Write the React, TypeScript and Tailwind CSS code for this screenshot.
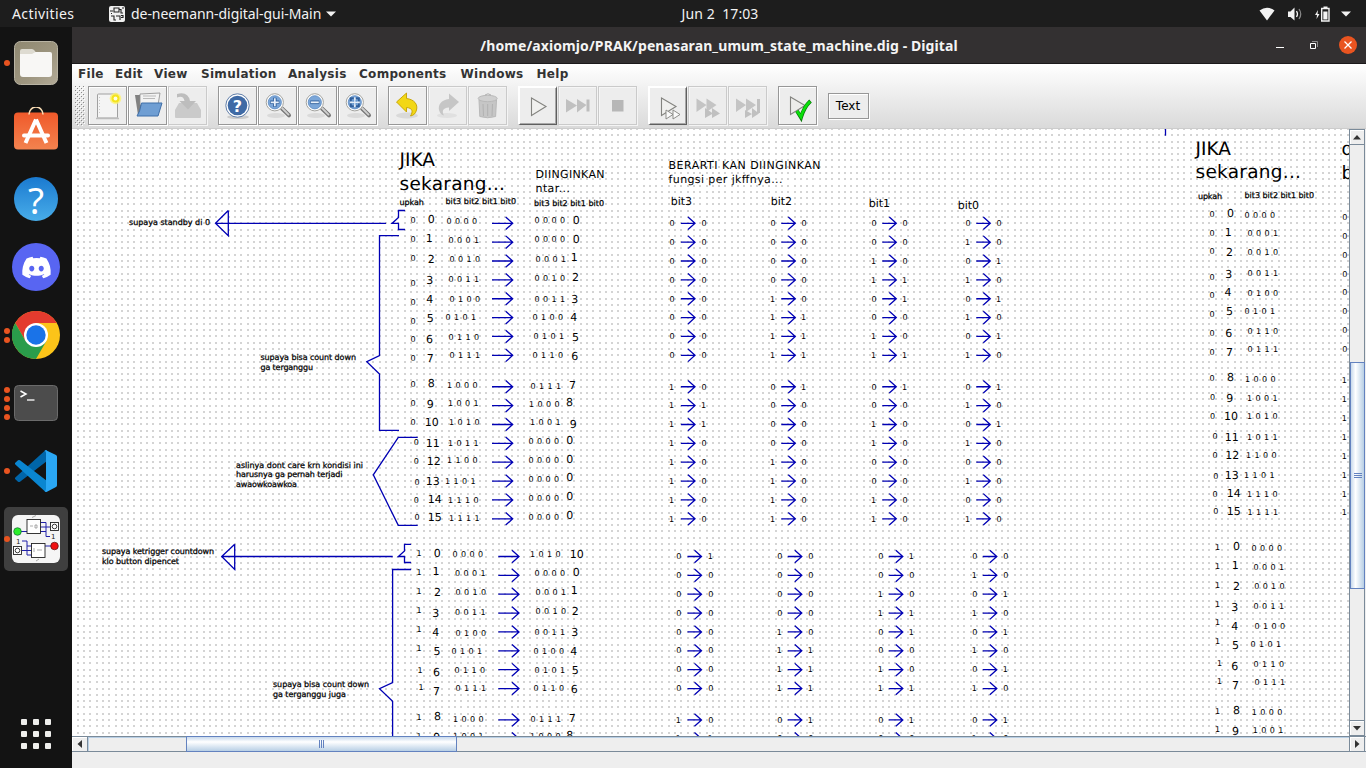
import React from "react";
import { FaDiscord } from "react-icons/fa";

const INK = "#0000b4";
const PITCH = 6.287;

type Row = [number, number];
type Block = {
  flag: string;
  flagPos: Row[];
  decPos: Row[];
  binPos: Row[];
};

const leftTop: Block = {
  flag: "0",
  flagPos: [[411, 220], [411, 239], [411, 258], [411, 283], [411, 302], [411, 321], [411, 339], [411, 358], [411, 384], [411, 402.6], [411, 421.6], [414.3, 442], [414.3, 461], [415, 482.3], [414.3, 500], [415, 517]],
  decPos: [[428.5, 219.3], [427, 238.3], [428.5, 259.3], [427, 280.3], [427, 299.3], [427.5, 318.3], [426.7, 339], [427.5, 358.3], [428.5, 383], [427.5, 404], [426, 422], [427, 443], [428, 461], [427, 481], [429, 499], [429, 517]],
  binPos: [[447, 221], [449, 240], [450, 259], [449, 279], [450, 299], [446, 317], [449, 337], [450, 355], [448, 385], [449, 403], [450, 422], [449, 443], [448, 460], [446, 481], [449, 500], [450, 518]],
};

const leftBottom: Block = {
  flag: "1",
  flagPos: [[417.5, 553.3], [417.5, 572.3], [417.5, 591.3], [417.5, 610.3], [417.5, 629.3], [417.5, 648.3], [418.5, 670.3], [419.5, 687.3], [417.5, 717], [417.5, 736]],
  decPos: [[434.5, 553.3], [433.7, 571.3], [434.7, 592.3], [433, 613.3], [433, 632.3], [434.3, 651.3], [433.7, 672.3], [433.7, 691.3], [434.7, 716.3], [434, 737]],
  binPos: [[453, 554], [455.5, 573], [456, 592], [455.5, 612], [456, 632.5], [452, 651], [455, 670], [456, 688], [454, 719], [454, 736]],
};

const rightTop: Block = {
  flag: "0",
  flagPos: [[1210, 214], [1210, 233], [1210, 251.3], [1210, 276.7], [1210, 295], [1210, 314], [1210, 333], [1210, 352], [1210, 377.5], [1210.5, 397], [1210.5, 416], [1213, 436], [1213, 455], [1213.7, 476], [1213, 494], [1213.7, 511]],
  decPos: [[1227.7, 213.3], [1226, 232.3], [1226.7, 252.3], [1226, 274.3], [1225.3, 292.3], [1226.7, 311.3], [1226, 333.3], [1226.7, 352.3], [1227.7, 377.3], [1227, 398], [1225.3, 416], [1226, 437], [1226.5, 455], [1226, 475], [1228, 493], [1228, 511]],
  binPos: [[1245, 215], [1248, 233], [1248, 252], [1248, 273], [1248, 293], [1245, 311], [1248, 331], [1248, 348.5], [1246, 379], [1248, 397.5], [1248, 416], [1248, 437], [1247, 455], [1245, 475], [1248, 494], [1248.5, 512]],
};

const rightBottom: Block = {
  flag: "1",
  flagPos: [[1216, 547], [1216, 566], [1216, 585.3], [1216, 604], [1216, 622.3], [1216, 641.3], [1218, 663.3], [1218, 681.3], [1216, 711], [1216, 729]],
  decPos: [[1233.7, 546], [1233, 565], [1233.7, 586], [1232, 607], [1232, 626], [1232.7, 645], [1232, 666], [1232.7, 685], [1233.7, 710], [1232.7, 730.7]],
  binPos: [[1252, 548], [1254, 567], [1254.7, 586], [1254, 606], [1255, 626], [1251, 644], [1254, 664], [1255, 682], [1252.7, 712], [1253.7, 730]],
};

type Target = { pos: Row; val: Row };
const nextTop: Target[] = [
  { pos: [535, 220.3], val: [573.5, 220.3] },
  { pos: [535, 239.3], val: [573.5, 239.3] },
  { pos: [536, 259], val: [572, 257.3] },
  { pos: [535, 278], val: [572.7, 277.3] },
  { pos: [535, 299], val: [572, 299.3] },
  { pos: [533, 317], val: [571, 317.3] },
  { pos: [534, 336], val: [572.7, 337.3] },
  { pos: [533, 355], val: [572, 356.3] },
  { pos: [531, 385.7], val: [569.7, 385] },
  { pos: [530, 404], val: [566.7, 402] },
  { pos: [531, 422], val: [570.5, 424] },
  { pos: [529, 441], val: [567, 440] },
  { pos: [529, 460], val: [567, 459] },
  { pos: [529, 479], val: [567, 477.3] },
  { pos: [529, 498], val: [567, 496.3] },
  { pos: [529, 517], val: [567, 515.3] },
];
const nextBottom: Target[] = [
  { pos: [531, 554], val: [571, 554] },
  { pos: [535, 573], val: [573.5, 572.4] },
  { pos: [536, 592], val: [572, 590.4] },
  { pos: [536, 611], val: [572.5, 611] },
  { pos: [535, 632], val: [572, 632] },
  { pos: [534, 651], val: [571, 651] },
  { pos: [535, 670], val: [572.5, 670] },
  { pos: [534, 688], val: [571.5, 689] },
  { pos: [531, 718.5], val: [569.5, 718] },
  { pos: [531, 736], val: [567, 735] },
];

const nextTopValues = [0, 0, 1, 2, 3, 4, 5, 6, 7, 8, 9, 0, 0, 0, 0, 0];
const nextBottomValues = [10, 0, 1, 2, 3, 4, 5, 6, 7, 8];

const bits = (n: number) => n.toString(2).padStart(4, "0");
const rowY = (base: number, i: number) => base + PITCH * (i * 3 + (i > 7 ? 2 : 0));

function Label({ x, y, size, w, children }: { x: number; y: number; size: number; w?: number; children: string }) {
  return (
    <text x={x} y={y} fontSize={size} textLength={w} lengthAdjust="spacing">
      {children}
    </text>
  );
}

function inkLeft(x: number, s: string, size: number) {
  return x - size * (s[0] === "1" ? 0.11 : 0.066);
}

function Digit({ at, s }: { at: Row; s: string }) {
  return <Label x={inkLeft(at[0], s, 8)} y={Math.round(at[1] + 3)} size={8}>{s}</Label>;
}

function Num({ at, s }: { at: Row; s: string }) {
  return <Label x={inkLeft(at[0], s, 11)} y={Math.round(at[1] + 4)} size={11}>{s}</Label>;
}

function Bin({ at, s }: { at: Row; s: string }) {
  return <Label x={inkLeft(at[0], s, 8)} y={Math.round(at[1] + 3)} size={8} w={30.5}>{s.split("").join(" ")}</Label>;
}

function Arrow({ x, y, len }: { x: number; y: number; len: number }) {
  const e = x + len;
  return <path d={`M${x} ${y}H${e}M${e - 7} ${y - 6.3}L${e} ${y}L${e - 7} ${y + 6.3}`} />;
}

function BlockText({ b }: { b: Block }) {
  return (
    <g>
      {b.flagPos.map((p, i) => (
        <g key={i}>
          <Digit at={p} s={b.flag} />
          <Num at={b.decPos[i]} s={String(i)} />
          <Bin at={b.binPos[i]} s={bits(i)} />
        </g>
      ))}
    </g>
  );
}

const jkCols = [
  { a: 670, l: 681, b: 702 },
  { a: 771, l: 781.3, b: 802 },
  { a: 872, l: 882.3, b: 903 },
  { a: 966, l: 976.3, b: 997 },
];

function Transitions({ values, base, dx }: { values: number[]; base: number; dx: number }) {
  return (
    <g>
      {values.map((v, i) =>
        jkCols.map((c, k) => (
          <g key={`${i}-${k}`}>
            <Digit at={[c.a + dx, rowY(base, i) - 0.2]} s={bits(i)[k]} />
            <Digit at={[c.b + dx, rowY(base, i) - 0.2]} s={bits(v)[k]} />
          </g>
        ))
      )}
    </g>
  );
}

function Canvas() {
  const dots: React.ReactNode[] = [];
  for (let r = 0; r < 97; r++)
    for (let c = 0; c < 203; c++)
      dots.push(<rect key={`${r}-${c}`} x={Math.round(76.8 + c * PITCH)} y={Math.round(128 + r * PITCH)} width="2" height="2" />);
  return (
    <svg viewBox="72 129 1277 607" className="block h-[607px] w-[1277px] bg-white">
      <g fill="#d4d4d4" shapeRendering="crispEdges">{dots}</g>
      <g fill="none" stroke={INK} strokeWidth="1.3">
        <path d="M386 223.4H216M228.3 210.5V235.7L215.5 223.3L228.3 210.5" />
        <path d="M405 210.5H398.5V217.5L392 223.4H398.5V229.5H405" />
        <path d="M399 235.6H379.5V355.7L366.8 361.6L379.5 374V430.4H399" />
        <path d="M417.7 437.4H398.3L373.3 474.8L398.3 525.4H417.7" />
        <path d="M392.7 556.5H222M234.7 544.3V569.5L221.7 556.5L234.7 544.3" />
        <path d="M411 544.4H404.5V551L398.3 556.5H404.5V562.5H411" />
        <path d="M411 569.5H392.6V682.5L379.5 688.6L392.6 701.3V740" />
        <path d="M1165.5 128V135.7" />
        {nextTopValues.map((_, i) => (
          <g key={i}>
            <Arrow x={492} y={rowY(223.3, i)} len={20.7} />
            {jkCols.map((c) => <Arrow key={c.l} x={c.l} y={rowY(223.3, i)} len={14} />)}
          </g>
        ))}
        {nextBottomValues.map((_, i) => (
          <g key={i}>
            <Arrow x={498.3} y={rowY(556.5, i)} len={20.7} />
            {jkCols.map((c) => <Arrow key={c.l} x={c.l + 6.5} y={rowY(556.5, i)} len={14} />)}
          </g>
        ))}
      </g>
      <g fill="#000" textRendering="geometricPrecision" style={{ fontFamily: '"DejaVu Sans", sans-serif' }}>
        <Label x={399.5} y={166} size={18.5}>JIKA</Label>
        <Label x={399.5} y={190} size={18.5} w={105.5}>sekarang...</Label>
        <Label x={535.5} y={178} size={11} w={69}>DIINGINKAN</Label>
        <Label x={535.5} y={192} size={11} w={34.5}>ntar...</Label>
        <Label x={668.5} y={169} size={11} w={152}>BERARTI KAN DIINGINKAN</Label>
        <Label x={668.5} y={183} size={11} w={114}>fungsi per jkffnya...</Label>
        <Label x={670.7} y={205} size={11}>bit3</Label>
        <Label x={770.7} y={205} size={11}>bit2</Label>
        <Label x={868.7} y={207} size={11}>bit1</Label>
        <Label x={957.7} y={209} size={11}>bit0</Label>
        <Label x={1195.5} y={155} size={18.5}>JIKA</Label>
        <Label x={1195.5} y={178} size={18.5} w={105.5}>sekarang...</Label>
        <Label x={1341.5} y={155} size={18.5}>d</Label>
        <Label x={1341.5} y={179} size={18.5}>b</Label>
        <g stroke="#000" strokeWidth="0.25">
          <Label x={399.5} y={205} size={8} w={24.3}>upkah</Label>
          <Label x={445.5} y={204} size={8} w={70.5}>bit3 bit2 bit1 bit0</Label>
          <Label x={534} y={206} size={8} w={70}>bit3 bit2 bit1 bit0</Label>
          <Label x={1198} y={199} size={8} w={24}>upkah</Label>
          <Label x={1244.5} y={198} size={8} w={69.5}>bit3 bit2 bit1 bit0</Label>
          <Label x={129} y={225} size={8} w={81}>supaya standby di 0</Label>
          <Label x={260.5} y={360} size={8} w={95.5}>supaya bisa count down</Label>
          <Label x={260.5} y={370} size={8} w={52.5}>ga terganggu</Label>
          <Label x={236} y={468} size={8} w={127}>aslinya dont care krn kondisi ini</Label>
          <Label x={236} y={477} size={8} w={106.5}>harusnya ga pernah terjadi</Label>
          <Label x={236} y={487} size={8} w={61}>awaowkoawkoa</Label>
          <Label x={102} y={554} size={8} w={112}>supaya ketrigger countdown</Label>
          <Label x={102} y={564} size={8} w={77}>klo button dipencet</Label>
          <Label x={273} y={687} size={8} w={96}>supaya bisa count down</Label>
          <Label x={273} y={697} size={8} w={73}>ga terganggu juga</Label>
        </g>
        <BlockText b={leftTop} />
        <BlockText b={leftBottom} />
        <BlockText b={rightTop} />
        <BlockText b={rightBottom} />
        {nextTop.map((t, i) => (
          <g key={i}>
            <Bin at={t.pos} s={bits(nextTopValues[i])} />
            <Num at={t.val} s={String(nextTopValues[i])} />
          </g>
        ))}
        {nextBottom.map((t, i) => (
          <g key={i}>
            <Bin at={t.pos} s={bits(nextBottomValues[i])} />
            <Num at={t.val} s={String(nextBottomValues[i])} />
          </g>
        ))}
        <Transitions values={nextTopValues} base={223.3} dx={0} />
        <Transitions values={nextBottomValues} base={556.3} dx={6.7} />
        {nextTopValues.map((_, i) => (
          <Digit key={i} at={[1342.7, rowY(217, i)]} s={bits(i)[0]} />
        ))}
      </g>
    </svg>
  );
}

/* ---------- dock ---------- */

function DockItem({ dots = 0, active = false, children }: { dots?: number; active?: boolean; children: React.ReactNode }) {
  return (
    <div className="flex h-[68px] w-[72px] items-center px-1">
      <div className={active ? "flex h-16 w-16 items-center rounded-[5px] bg-[#3f3f3f]" : "flex h-16 w-16 items-center"}>
        <div className="flex w-2 flex-col items-start gap-[3px]">
          {Array.from({ length: dots }, (_, i) => (
            <span key={i} className="size-[6px] rounded-full bg-[#e95420]" />
          ))}
        </div>
        {children}
      </div>
    </div>
  );
}

function Dock() {
  return (
    <nav className="flex w-[72px] shrink-0 flex-col bg-[#131313] pt-[2px]">
      <DockItem dots={1}>
        <svg className="size-12" viewBox="0 0 48 48">
          <defs>
            <linearGradient id="fileBg" x1="0" y1="0" x2="1" y2="1">
              <stop offset="0" stopColor="#8f8871" />
              <stop offset=".6" stopColor="#9e9680" />
              <stop offset="1" stopColor="#b3ab98" />
            </linearGradient>
          </defs>
          <rect x="2.5" y="2.5" width="43" height="43" rx="6" fill="url(#fileBg)" stroke="#b8b3a3" />
          <path d="M8 12q0-2 2-2h10q1.500 0 2.500 1.500l1.500 2h14v8H8z" fill="#dedbd1" />
          <path d="M8 15h12l3.500-2H38q2 0 2 2v20q0 3-3 3H11q-3 0-3-3z" fill="#f8f7f5" />
        </svg>
      </DockItem>
      <DockItem>
        <svg className="size-12" viewBox="0 0 48 48">
          <defs>
            <linearGradient id="bag" x1="0" y1="0" x2="0" y2="1">
              <stop offset="0" stopColor="#f0592a" />
              <stop offset="1" stopColor="#f3834f" />
            </linearGradient>
          </defs>
          <rect x="2" y="5.500" width="44" height="37" rx="4" fill="url(#bag)" />
          <path d="M17 7.500a7 7.500 0 0 1 14 0" fill="none" stroke="#f8dcb4" strokeWidth="1.6" />
          <path d="M24 12.500L13.500 36M24 12.500L34.500 36" stroke="#fff" strokeWidth="4" fill="none" />
          <path d="M12 28.500H36" stroke="#fff" strokeWidth="4" strokeLinecap="round" />
        </svg>
      </DockItem>
      <DockItem>
        <div className="mx-0.5 flex size-11 items-center justify-center rounded-full bg-linear-to-b from-[#1a7ad0] to-[#48ade9] font-['Noto_Sans',sans-serif] text-[37px] leading-none text-white">
          ?
        </div>
      </DockItem>
      <DockItem>
        <div className="flex size-12 items-center justify-center rounded-full bg-[#5865f2] text-white">
          <FaDiscord size={31} />
        </div>
      </DockItem>
      <DockItem dots={2}>
        <svg className="size-12" viewBox="0 0 48 48">
          <circle cx="24" cy="24" r="24" fill="#fcc419" />
          <path d="M24 12H44.800A24 24 0 0 0 3.200 12L13.600 30Z" fill="#e33b2e" />
          <path d="M3.200 12A24 24 0 0 0 24 48L34.400 30L24 36L13.600 30Z" fill="#2a9d4b" />
          <circle cx="24" cy="24" r="12" fill="#fff" />
          <circle cx="24" cy="24" r="9.700" fill="#1a73e8" />
        </svg>
      </DockItem>
      <DockItem dots={4}>
        <svg className="size-12" viewBox="0 0 48 48">
          <rect x="2.500" y="6.500" width="43" height="35" rx="4" fill="#4c4c4c" stroke="#6b6b6b" />
          <path d="M8.500 12L14 15L8.500 18" fill="none" stroke="#fff" strokeWidth="1.500" />
          <path d="M15 21H22.500" stroke="#fff" strokeWidth="1.300" />
        </svg>
      </DockItem>
      <DockItem dots={1}>
        <svg className="size-12" viewBox="0 0 48 48">
          <path d="M3.300 30.500Q2.500 31.500 3.300 32.300L6 34.700Q7 35.300 8 34.700L35 14V3Q33.500 3 32.500 4Z" fill="#0065a9" />
          <path d="M3.300 17.500Q2.500 16.500 3.300 15.700L6 13.300Q7 12.700 8 13.300L35 34V45Q33.500 45 32.500 44Z" fill="#0a86d1" />
          <path d="M34 3.300L44 8Q45 8.600 45 9.700V38.300Q45 39.400 44 40L35 44.700Q33.500 45.200 32.500 44Q34 44 34 42V6Q34 4 32.500 4Q33 3 34 3.300Z" fill="#2aa7f4" />
        </svg>
      </DockItem>
      <DockItem dots={1} active>
        <svg className="size-12" viewBox="0 0 48 48">
          <rect width="48" height="48" rx="6" fill="#f5f5f5" />
          <g fill="none" stroke="#2020a8" strokeWidth="1">
            <path d="M9 16.500H15M28 7.500H34V21.500H38M28 12H38M28 16.500H34M10 26H15V40H20M15 31H20M10 35.500H20M33 31H39" />
          </g>
          <g fill="#fff" stroke="#222" strokeWidth=".9">
            <rect x="15" y="4.500" width="13.500" height="14" />
            <rect x="19.500" y="28.500" width="13.500" height="14" />
            <rect x="38.500" y="7.500" width="8" height="8" />
            <rect x="1.500" y="31.500" width="8" height="8" />
            <circle cx="42.500" cy="11.500" r="2.300" />
            <circle cx="5.500" cy="35.500" r="2.300" />
          </g>
          <circle cx="5.500" cy="16.500" r="3.800" fill="#2bee2b" stroke="#163" strokeWidth=".7" />
          <circle cx="42.500" cy="31" r="3.800" fill="#f01010" stroke="#511" strokeWidth=".7" />
          <path d="M18 11h3m2-1h2v3h-2zM25 35h5M22 33v4M20 2.500l4-2M24 46l3-2" stroke="#888" strokeWidth=".7" fill="none" />
          <g fill="#222" fontSize="7" style={{ fontFamily: '"DejaVu Sans", sans-serif' }}>
            <text x="39" y="24">1</text>
            <text x="4" y="28.500">1</text>
          </g>
        </svg>
      </DockItem>
      <div className="mt-auto mb-[19px] grid grid-cols-3 gap-[6px] self-center">
        {Array.from({ length: 9 }, (_, i) => (
          <span key={i} className="size-[6px] rounded-[1px] bg-[#eeeeec]" />
        ))}
      </div>
    </nav>
  );
}

/* ---------- toolbar ---------- */

function Tool({ look = "on", children }: { look?: "on" | "off" | "run"; children: React.ReactNode }) {
  const cls =
    look === "on"
      ? "border border-[#979797] shadow-[inset_1px_1px_0_#fff,1px_1px_0_#fff]"
      : look === "off"
        ? "border border-[#cacaca] shadow-[inset_1px_1px_0_#f6f6f6,1px_1px_0_#f4f4f4]"
        : "border-t-2 border-l-2 border-r border-b border-t-white border-l-white border-r-[#5f5f5f] border-b-[#5f5f5f] shadow-[inset_-1px_-1px_0_#a8a8a8]";
  return (
    <button className={`mr-px flex h-[39px] w-[39px] items-center justify-center bg-[#ededed] ${cls}`}>
      <svg viewBox="0 0 39 39" className="h-[39px] w-[39px] shrink-0">{children}</svg>
    </button>
  );
}

function Magnifier({ children }: { children: React.ReactNode }) {
  return (
    <>
      <ellipse cx="18" cy="29.500" rx="9" ry="2.500" fill="#dadada" />
      <path d="M24 22.500L31 29.300" stroke="#777" strokeWidth="4" strokeLinecap="round" />
      <path d="M24 22L30.500 28.600" stroke="#cfcfcf" strokeWidth="1.800" strokeLinecap="round" />
      <g transform="translate(-.7 .8)">
        <circle cx="17.500" cy="15.500" r="8.600" fill="#fff" stroke="#a3a39f" strokeWidth="1" />
        <circle cx="17.500" cy="15.500" r="6.600" fill="#7ba6d8" stroke="#5c8ac2" strokeWidth=".8" />
        {children}
      </g>
    </>
  );
}

const ffwd = "M11 12.500L21 19L11 26ZM21 12.500L31 19L21 26Z";

function Toolbar() {
  return (
    <div className="flex h-[45px] items-start pt-[3px] pl-[3px]">
      <svg className="mr-[3px] h-10 w-[10px]" viewBox="0 0 10 40">
        <defs>
          <pattern id="grip" width="4" height="4" patternUnits="userSpaceOnUse">
            <rect width="1" height="1" fill="#8a8a8a" />
            <rect x="2" y="2" width="1" height="1" fill="#8a8a8a" />
            <rect x="1" y="1" width="1" height="1" fill="#fff" />
            <rect x="3" y="3" width="1" height="1" fill="#fff" />
          </pattern>
        </defs>
        <rect width="10" height="40" fill="url(#grip)" />
      </svg>
      <div className="mr-[10px] flex">
        <Tool>
          <rect x="9.500" y="8" width="20" height="24" rx="1" fill="#f4f4f4" stroke="#a0a0a0" />
          <path d="M8 32.500H31" stroke="#bcbcbc" strokeWidth="1.500" />
          <path d="M11.500 11v18" stroke="#c8c8c8" strokeDasharray="1 2" />
          <circle cx="27.500" cy="12.500" r="5.800" fill="#fff36b" opacity=".75" />
          <circle cx="27.500" cy="12.500" r="4" fill="#f4e41c" />
          <circle cx="27.500" cy="12.500" r="1.900" fill="#fffde0" />
        </Tool>
        <Tool>
          <path d="M7 9h8l2 2v18H10z" fill="#808080" />
          <path d="M12 8l20-1-2 12H12z" fill="#f3f3f3" stroke="#8a8a8a" strokeWidth=".8" />
          <path d="M15 10h13M15 12.500h12" stroke="#aaa" strokeWidth=".8" />
          <path d="M13.500 17H34l-4 13H9q3-4 4.500-13z" fill="#6f9ed3" stroke="#3f6ea8" />
        </Tool>
        <Tool look="off">
          <path d="M7 24l4-7h18l4 7v7q0 1-1 1H8q-1 0-1-1z" fill="#cacaca" />
          <path d="M9 8q11-3 13 7h6l-8 8.500-8.500-8.500h5q-1-6-7.500-3.500z" fill="#bdbdbd" />
        </Tool>
      </div>
      <div className="mr-[10px] flex">
        <Tool>
          <ellipse cx="20" cy="31" rx="11" ry="2" fill="#ccc" />
          <circle cx="19.500" cy="19.500" r="11.700" fill="#fff" stroke="#4e6f9f" strokeWidth=".9" />
          <circle cx="19.500" cy="19.500" r="9.800" fill="#3f6aa5" />
          <text x="19.500" y="25.500" textAnchor="middle" fontSize="16" fontWeight="700" fill="#fff" style={{ fontFamily: '"DejaVu Sans", sans-serif' }}>?</text>
        </Tool>
        <Tool>
          <Magnifier>
            <path d="M17.500 11v9M13 15.500h9" stroke="#2f5f9c" strokeWidth="3.600" />
            <path d="M17.500 11.500v8M13.500 15.500h8" stroke="#e8f0fa" strokeWidth="1.800" />
          </Magnifier>
        </Tool>
        <Tool>
          <Magnifier>
            <path d="M13 15.500h9" stroke="#2f5f9c" strokeWidth="3.600" />
            <path d="M13.500 15.500h8" stroke="#e8f0fa" strokeWidth="1.800" />
          </Magnifier>
        </Tool>
        <Tool>
          <Magnifier>
            <rect x="13.500" y="11.500" width="8" height="8" fill="none" stroke="#2f5f9c" strokeWidth="2" />
            <path d="M17.500 10.500v10M12.500 15.500h10" stroke="#e4edf8" strokeWidth="1.800" />
            <path d="M15 13h5v5h-5z" fill="#6b9bd0" />
            <path d="M17.500 12v7M14 15.500h7" stroke="#e4edf8" strokeWidth="1.200" />
          </Magnifier>
        </Tool>
      </div>
      <div className="mr-[10px] flex">
        <Tool>
          <ellipse cx="19" cy="29.500" rx="11" ry="3" fill="#d9d9d9" />
          <path d="M8.500 16L18.500 7v5.500c8 1 11.500 6 10 11.500-.8 3.500-3 5.500-6 6 2.500-4 2.500-8-4-8.500V26z" fill="#f2d716" stroke="#c4a000" strokeWidth=".9" />
        </Tool>
        <Tool look="off">
          <ellipse cx="19" cy="29.500" rx="10" ry="2.500" fill="#e0e0e0" />
          <path d="M31 16L21 7.500v5.500c-8 1-11 6-10 11 .8 3.500 3 5 5 5.500-2-4-2-7.500 5-8V25z" fill="#c6c6c6" />
        </Tool>
        <Tool look="off">
          <path d="M11 14l.8 16.500q7.700 2.500 15.800 0L28.500 14z" fill="#c6c6c6" stroke="#b9b9b9" />
          <ellipse cx="19.700" cy="12.500" rx="9.500" ry="3.200" fill="#cfcfcf" stroke="#b9b9b9" />
          <path d="M17 9q3-2.500 6 0M15 18l.5 12M19.700 18v12M24.500 18L24 30" stroke="#b2b2b2" fill="none" />
        </Tool>
      </div>
      <div className="mr-[10px] flex">
        <Tool look="run">
          <path d="M12.500 11L27 19.500L12.500 28.500Z" fill="#f0f0ee" stroke="#83837f" strokeWidth="1.100" />
        </Tool>
        <Tool look="off">
          <path d="M8 13L19 19.500L8 26.500ZM19 13L28.500 19L19 26.500Z" fill="#c0c0c0" />
          <path d="M30 13.500v12" stroke="#bdbdbd" strokeWidth="3" />
        </Tool>
        <Tool look="off">
          <rect x="14" y="14" width="11.500" height="11.500" fill="#b7b7b7" />
        </Tool>
      </div>
      <div className="mr-[10px] flex">
        <Tool look="run">
          <path d="M12.500 11L27 19.500L12.500 28.500Z" fill="#f0f0ee" stroke="#83837f" strokeWidth="1.100" />
          <path d="M17 23L24 27.500L17 32ZM24 23L31 27.500L24 32Z" fill="#fafafa" stroke="#83837f" strokeWidth=".9" />
        </Tool>
        <Tool look="off">
          <path d={ffwd} transform="translate(-2.500 0)" fill="#c4c4c4" />
          <path d="M17 22L25 27.500L17 32ZM24 22L32 27.500L24 32Z" fill="#c0c0c0" />
        </Tool>
        <Tool look="off">
          <path d={ffwd} transform="translate(-3 0)" fill="#c4c4c4" />
          <path d="M17 24L24 28L17 32ZM24 22L31 27.500L24 32Z" fill="#c0c0c0" />
          <path d="M30.500 13v14" stroke="#c0c0c0" strokeWidth="3" />
        </Tool>
      </div>
      <div className="mr-[10px] flex">
        <Tool>
          <path d="M12.500 11L27 19.500L12.500 28.500Z" fill="#ececea" stroke="#83837f" strokeWidth="1.100" />
          <path d="M19 25L23 31.500Q26 21 32.500 15" fill="none" stroke="#087a08" strokeWidth="3.800" />
          <path d="M19 25L23 31Q26 21 32 15.500" fill="none" stroke="#0be00b" strokeWidth="2.600" />
        </Tool>
      </div>
      <button className="mt-[7px] h-[26px] w-[41px] border border-[#979797] bg-[#ededed] pr-px font-['DejaVu_Sans',sans-serif] text-[12px] leading-[22px] text-black shadow-[inset_1px_1px_0_#fff,1px_1px_0_#fff]">
        Text
      </button>
    </div>
  );
}

function ScrollButton({ d, className }: { d: string; className: string }) {
  return (
    <button className={`flex shrink-0 items-center justify-center bg-[#eeeeee] shadow-[inset_1px_1px_0_#fff] ${className}`}>
      <svg viewBox="0 0 10 10" className="size-[10px]"><path d={d} fill="#333" /></svg>
    </button>
  );
}

function StatusIcons() {
  return (
    <div className="flex items-center">
      <svg className="mr-3 h-[14px] w-4" viewBox="0 0 16 14"><path d="M.5 3.500Q8-1.800 15.500 3.500L8 13.500Z" fill="#f2f2f2" /></svg>
      <svg className="mr-[12px] h-[14px] w-[16px]" viewBox="0 0 16 14">
        <path d="M1 4.500h2.500L7.500.5v13L3.500 10H1z" fill="#f2f2f2" />
        <path d="M9.500 4q2 3 0 6" stroke="#f2f2f2" strokeWidth="1.300" fill="none" />
        <path d="M12 2q3.500 5 0 10" stroke="#8a8a8a" strokeWidth="1.200" fill="none" />
      </svg>
      <svg className="mr-[11px] h-4 w-[15px]" viewBox="0 0 15 16">
        <path d="M3 4L0 9h2L1.500 13L4.500 8h-2z" fill="#f2f2f2" />
        <path d="M6.700 2.500H14V15H6.700zM8.500 1.200h4" fill="none" stroke="#f2f2f2" strokeWidth="1.400" />
        <rect x="8.300" y="5.500" width="4.200" height="8" fill="#f2f2f2" />
      </svg>
      <svg className="h-[6px] w-[10px]" viewBox="0 0 10 6"><path d="M0 .5h10L5 5.500z" fill="#f2f2f2" /></svg>
    </div>
  );
}

const menus: [string, string][] = [
  ["File", "w-[37px]"],
  ["Edit", "w-[39px]"],
  ["View", "w-[47px]"],
  ["Simulation", "w-[87px]"],
  ["Analysis", "w-[71px]"],
  ["Components", "w-[101.5px]"],
  ["Windows", "w-[76px]"],
  ["Help", "w-[40px]"],
];

export default function App() {
  return (
    <div className="flex h-[768px] w-[1366px] flex-col overflow-hidden bg-[#131313]">
      <header className="grid h-[27px] shrink-0 grid-cols-[1fr_auto_1fr] items-center bg-[#1d1d1d] font-['Noto_Sans',sans-serif] text-[14px] text-[#f2f2f2]">
        <div className="flex items-center pl-[12px]">
          <span className="w-[97px] tracking-[0.4px]">Activities</span>
          <svg className="mr-[6px] size-4" viewBox="0 0 16 16">
            <rect width="16" height="16" rx="2" fill="#f0f0f0" />
            <path d="M1 5h3M5 2h5v4H5zM10 3.500h2V7h2M13 2h2M2 10h3v4h2M7 10h4v4M12 9.500h2v2h-2M2 7.500h1" fill="none" stroke="#222" strokeWidth="1.100" />
          </svg>
          <span className="tracking-[-0.06px]">de-neemann-digital-gui-Main</span>
          <svg className="ml-[5px] h-[6px] w-[10px]" viewBox="0 0 10 6"><path d="M0 .5h10L5 5.500z" fill="#f2f2f2" /></svg>
        </div>
        <div className="relative left-[37px] whitespace-pre tracking-[0.08px]">Jun 2  17:03</div>
        <div className="flex justify-end pr-[15px]"><StatusIcons /></div>
      </header>

      <div className="flex min-h-0 flex-1">
        <Dock />
        <main className="flex w-[1294px] flex-col bg-[#eeeeee]">
          <div className="grid h-[37px] shrink-0 grid-cols-[1fr_auto_1fr] items-center border-b border-[#1c1a1b] bg-[#333031]">
            <span />
            <h1 className="font-['Noto_Sans',sans-serif] text-[14px] font-bold tracking-[0.09px] text-[#f4f4f4]">
              /home/axiomjo/PRAK/penasaran_umum_state_machine.dig - Digital
            </h1>
            <div className="flex items-center justify-end pr-[9px]">
              <svg className="mr-[26px] h-[10px] w-2" viewBox="0 0 8 10"><path d="M0 7.500h8" stroke="#fff" /></svg>
              <svg className="mr-[21px] size-2" viewBox="0 0 8 8">
                <path d="M.5 2.500h5v5h-5z" fill="none" stroke="#fff" />
                <path d="M2 .5h5.500V6" fill="none" stroke="#8c8a8b" />
              </svg>
              <span className="flex size-[18px] items-center justify-center rounded-full bg-[#e95420]">
                <svg className="size-2" viewBox="0 0 8 8"><path d="M.5.5l7 7M7.500.5l-7 7" stroke="#fff" strokeWidth="1.300" /></svg>
              </span>
            </div>
          </div>

          <div className="h-[65px] shrink-0 border-b border-[#cccccc] bg-linear-to-b from-white to-[#dadada]">
            <div className="flex h-[19px] items-center pl-[6px] font-['DejaVu_Sans',sans-serif] text-[12px] font-bold tracking-[0.3px] text-[#333333]">
              {menus.map(([name, w]) => (
                <span key={name} className={`${w} shrink-0`}>{name}</span>
              ))}
            </div>
            <Toolbar />
          </div>

          <div className="flex h-[607px] shrink-0">
            <Canvas />
            <div className="flex w-[17px] flex-col border-l border-[#7a8a99] bg-[#eeeeee]">
              <ScrollButton d="M1 7.500L5 3L9 7.500z" className="h-[16px] w-[15px] border-t border-r border-b border-[#7a8a99]" />
              <div className="flex h-[575px] w-[15px] flex-col border-r border-[#7a8a99] pt-[217px]">
                <div className="flex h-[227px] w-[15px] flex-col items-center justify-center gap-px border border-[#6382bf] bg-linear-to-r from-[#c8d9ec] via-white via-35% to-[#b8cfe5]">
                  <span className="h-px w-2 bg-[#6382bf]" />
                  <span className="h-px w-2 bg-[#6382bf]" />
                  <span className="h-px w-2 bg-[#6382bf]" />
                </div>
              </div>
              <ScrollButton d="M1 3L9 3L5 7.500z" className="h-[16px] w-[15px] border-t border-r border-b border-[#7a8a99]" />
            </div>
          </div>

          <div className="flex h-[16px] shrink-0 border-t border-b border-[#7a8a99]">
            <ScrollButton d="M7 1L7 9L2.500 5z" className="h-full w-4 border-r border-[#7a8a99]" />
            <div className="flex flex-1 pl-[98px] shadow-[inset_1px_1px_0_#b8cfe5]">
              <div className="-my-px flex h-[16px] w-[271px] items-center justify-center gap-px border border-[#6382bf] bg-linear-to-b from-[#c8d9ec] via-white via-35% to-[#b8cfe5]">
                <span className="h-2 w-px bg-[#6382bf]" />
                <span className="h-2 w-px bg-[#6382bf]" />
                <span className="h-2 w-px bg-[#6382bf]" />
              </div>
            </div>
            <ScrollButton d="M3 1L3 9L7.500 5z" className="h-full w-4 border-r border-l border-[#7a8a99]" />
            <span className="w-px" />
          </div>
        </main>
      </div>
    </div>
  );
}
